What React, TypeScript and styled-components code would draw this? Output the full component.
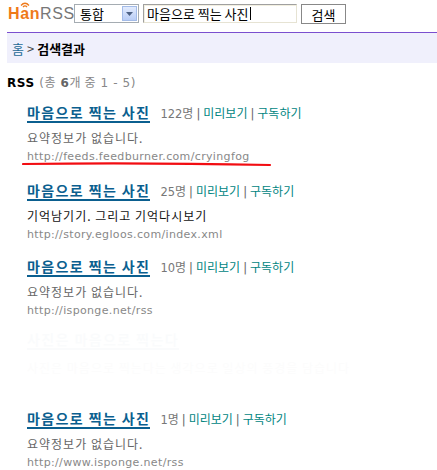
import React from 'react';
import styled, { createGlobalStyle } from 'styled-components';

const GlobalStyle = createGlobalStyle`
  html, body {
    background: #fff;
    margin: 0;
    overflow: hidden;
  }
  body {
    font-family: "DejaVu Sans", "Noto Sans CJK KR", sans-serif;
  }
`;

const Page = styled.div`
  padding-left: 7px;
  width: 440px;
`;

const Header = styled.div`
  align-items: center;
  display: flex;
  height: 32px;
  padding-left: 1px;
`;

const Logo = styled.div`
  flex: none;
  font-family: "Liberation Sans", sans-serif;
  font-size: 16px;
  letter-spacing: 0.6px;
  margin-right: 9px;
  margin-top: -4px;
  overflow: visible;
  white-space: nowrap;
  width: 57px;
`;

const LogoHan = styled.span`
  color: #ef7a1a;
  font-weight: bold;
`;

const LogoA = styled.span`
  display: inline-block;
  position: relative;

  svg {
    left: 0px;
    position: absolute;
    top: -4px;
  }
`;

const LogoRss = styled.span`
  color: #777;
`;

const SelectBox = styled.div`
  align-items: center;
  border: 1px solid #a5acb2;
  box-sizing: border-box;
  display: flex;
  flex: none;
  font-family: "Noto Sans CJK KR", sans-serif;
  font-size: 13px;
  height: 19px;
  justify-content: space-between;
  margin-top: -5px;
  padding: 1px 1px 1px 5px;
  width: 65px;
`;

const DropButton = styled.div`
  align-items: center;
  background: linear-gradient(#e2ebfd, #b9cdf6);
  border: 1px solid #a3bbe8;
  box-sizing: border-box;
  display: flex;
  height: 15px;
  justify-content: center;
  width: 15px;
`;

const SearchInput = styled.div`
  align-items: center;
  border: 1px solid #a0a0a0;
  border-right-color: #e6e3d3;
  border-bottom-color: #e6e3d3;
  box-shadow: inset 1px 1px 0 #f2efe0;
  box-sizing: border-box;
  display: flex;
  flex: none;
  font-family: "Noto Sans CJK KR", sans-serif;
  font-size: 13px;
  height: 19px;
  margin-left: 4px;
  margin-top: -5px;
  padding-left: 3px;
  width: 154px;
`;

const Caret = styled.span`
  background: #000;
  display: inline-block;
  height: 13px;
  margin-left: 1px;
  width: 1px;
`;

const SearchButton = styled.div`
  align-items: center;
  border: 1px solid #888;
  box-sizing: border-box;
  display: flex;
  flex: none;
  font-family: "Noto Sans CJK KR", sans-serif;
  font-size: 13px;
  height: 20px;
  justify-content: center;
  margin-left: 4px;
  margin-top: -4px;
  width: 45px;
`;

const Crumbs = styled.div`
  align-items: center;
  background: #f0f0fc;
  border-top: 1px solid #7b4fcf;
  display: flex;
  font-family: "Noto Sans CJK KR", sans-serif;
  font-size: 13px;
  height: 30px;
  padding-left: 5px;
`;

const CrumbLink = styled.span`
  color: #1f6a95;
`;

const CrumbSep = styled.span`
  color: #444;
  margin: 0 3px;
`;

const CrumbCurrent = styled.span`
  color: #000;
  font-weight: bold;
`;

const Heading = styled.div`
  color: #888;
  font-size: 12px;
  letter-spacing: 0.6px;
  line-height: 18px;
  margin: 10px 0 9px;
  white-space: nowrap;
`;

const Strong = styled.b<{ $dark?: boolean }>`
  color: ${p => (p.$dark ? '#000' : '#666')};
`;

const Item = styled.div<{ $ghost?: boolean; $extra?: number }>`
  margin-bottom: ${p => 11 + (p.$extra || 0)}px;
  opacity: ${p => (p.$ghost ? 0.015 : 1)};
  padding-left: 20px;
  position: relative;
`;

const TitleRow = styled.div`
  align-items: baseline;
  display: flex;
  height: 24px;
  line-height: 24px;
  white-space: nowrap;
`;

const Title = styled.span`
  border-bottom: 2px solid #0b5f8f;
  color: #0b5f8f;
  font-family: "Noto Sans CJK KR", sans-serif;
  font-size: 14px;
  font-weight: bold;
  letter-spacing: 1.4px;
  line-height: 17px;
`;

const Meta = styled.span`
  color: #777;
  font-size: 11.5px;
  margin-left: 10px;
`;

const Bar = styled.span`
  color: #666;
  margin: 0 3px;
`;

const MetaLink = styled.span`
  color: #00857f;
  font-family: "Noto Sans CJK KR", sans-serif;
  font-size: 12px;
`;

const Unit = styled.span`
  font-family: "Noto Sans CJK KR", sans-serif;
  font-size: 12px;
`;

const Desc = styled.div<{ $dark?: boolean }>`
  color: ${p => (p.$dark ? '#111' : '#666')};
  font-family: "Noto Sans CJK KR", sans-serif;
  font-size: 12px;
  letter-spacing: 1px;
  line-height: 20px;
  margin-top: 3px;
  white-space: nowrap;
`;

const Url = styled.div`
  color: #888;
  font-size: 11px;
  letter-spacing: 0.35px;
  line-height: 18px;
`;

const RedMark = styled.svg`
  left: 15px;
  position: absolute;
  top: 61px;
`;

type Feed = {
  title: string;
  count: number;
  desc: string;
  darkDesc?: boolean;
  url: string;
  ghost?: boolean;
  marked?: boolean;
};

const feeds: Feed[] = [
  { title: '마음으로 찍는 사진', count: 122, desc: '요약정보가 없습니다.', url: 'http://feeds.feedburner.com/cryingfog', marked: true },
  { title: '마음으로 찍는 사진', count: 25, desc: '기억남기기. 그리고 기억다시보기', darkDesc: true, url: 'http://story.egloos.com/index.xml' },
  { title: '마음으로 찍는 사진', count: 10, desc: '요약정보가 없습니다.', url: 'http://isponge.net/rss' },
  { title: '사진은 마음으로 찍는다', count: 3, desc: '사진은 마음으로 찍는다는 생각으로 일상의 풍경을 담습니다', url: '', ghost: true },
  { title: '마음으로 찍는 사진', count: 1, desc: '요약정보가 없습니다.', url: 'http://www.isponge.net/rss' },
];

export default function App() {
  return (
    <Page>
      <GlobalStyle />
      <Header>
        <Logo>
          <LogoHan>
            H
            <LogoA>
              a
              <svg width="10" height="7" viewBox="0 0 10 7">
                <path d="M1 4.5 Q5 0 9 4.5" fill="none" stroke="#ef7a1a" strokeWidth="1.3" />
                <path d="M3 6 Q5 3.8 7 6" fill="none" stroke="#ef7a1a" strokeWidth="1.3" />
              </svg>
            </LogoA>
            n
          </LogoHan>
          <LogoRss>RSS</LogoRss>
        </Logo>
        <SelectBox>
          통합
          <DropButton>
            <svg width="7" height="4" viewBox="0 0 7 4">
              <path d="M0 0 H7 L3.5 4 Z" fill="#4d6185" />
            </svg>
          </DropButton>
        </SelectBox>
        <SearchInput>
          마음으로 찍는 사진
          <Caret />
        </SearchInput>
        <SearchButton>검색</SearchButton>
      </Header>
      <Crumbs>
        <CrumbLink>홈</CrumbLink>
        <CrumbSep>&gt;</CrumbSep>
        <CrumbCurrent>검색결과</CrumbCurrent>
      </Crumbs>
      <Heading>
        <Strong $dark>RSS</Strong> (<Unit>총</Unit> <Strong>6</Strong><Unit>개 중</Unit> 1 - 5)
      </Heading>
      {feeds.map((f, i) => (
        <Item key={i} $ghost={f.ghost} $extra={f.marked ? 2 : 0}>
          <TitleRow>
            <Title>{f.title}</Title>
            {!f.ghost && (
              <Meta>
                {f.count}
                <Unit>명</Unit>
                <Bar>|</Bar>
                <MetaLink>미리보기</MetaLink>
                <Bar>|</Bar>
                <MetaLink>구독하기</MetaLink>
              </Meta>
            )}
          </TitleRow>
          <Desc $dark={f.darkDesc}>{f.desc}</Desc>
          <Url>{f.url || '\u00a0'}</Url>
          {f.marked && (
            <RedMark width="250" height="5" viewBox="0 0 250 5">
              <path d="M1 2 Q120 0.5 248 3" fill="none" stroke="#f20d12" strokeWidth="2.2" strokeLinecap="round" />
            </RedMark>
          )}
        </Item>
      ))}
    </Page>
  );
}
